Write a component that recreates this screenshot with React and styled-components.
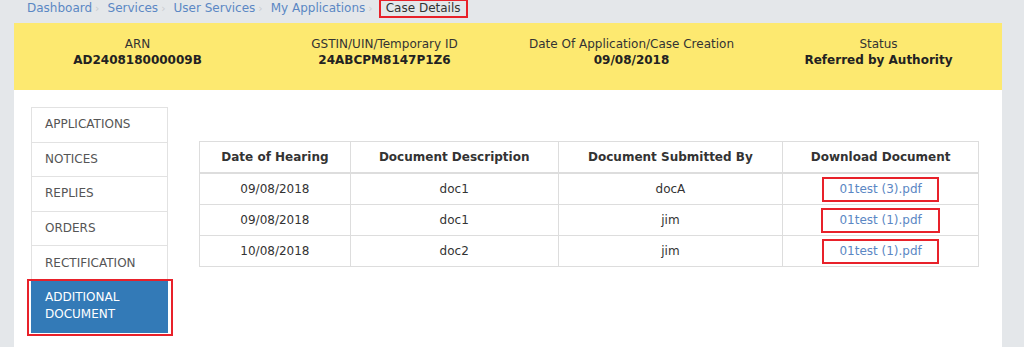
import React from "react";
import styled, { createGlobalStyle } from "styled-components";

const GlobalStyle = createGlobalStyle`
  body {
    margin: 0;
    background: #e4e7ea;
    font-family: "DejaVu Sans", Verdana, sans-serif;
    font-size: 12px;
    color: #333;
  }
`;

const Page = styled.div`
  width: 988px;
  margin-left: 14px;
`;

const Breadcrumb = styled.nav`
  display: flex;
  align-items: flex-start;
  height: 23px;
  padding: 1px 0 0 13px;
  box-sizing: border-box;
  font-size: 12px;
  line-height: 15px;
`;

const Crumb = styled.a`
  color: #5b87c4;
  text-decoration: none;
`;

const Sep = styled.span`
  color: #c9ccd0;
  font-size: 11px;
  margin: 0 8px 0 3px;
`;

const Current = styled.span`
  color: #333;
  padding: 0 5px;
  outline: 2px solid #e8212a;
  line-height: 15px;
`;

const SummaryBand = styled.div`
  display: grid;
  grid-template-columns: repeat(4, 1fr);
  align-items: start;
  box-sizing: border-box;
  height: 67px;
  padding-top: 13px;
  background: #fde970;
`;

const SummaryItem = styled.div`
  text-align: center;
  line-height: 16px;
`;

const SummaryLabel = styled.div`
  color: #333;
`;

const SummaryValue = styled.div`
  font-weight: bold;
  color: #222;
`;

const Content = styled.div`
  display: flex;
  align-items: flex-start;
  gap: 31px;
  background: #fff;
  padding: 18px 23px 14px 17px;
  min-height: 240px;
`;

const SideMenu = styled.ul`
  list-style: none;
  margin: 0;
  padding: 0;
  width: 137px;
  flex-shrink: 0;
`;

const MenuItem = styled.li`
  box-sizing: border-box;
  padding: ${(p) => (p.$active ? "9px 13px" : "0 13px")};
  height: ${(p) => (p.$active ? "53px" : "35.6px")};
  display: flex;
  align-items: center;
  line-height: 17px;
  border: 1px solid #e2e2e2;
  margin-top: -1px;
  color: ${(p) => (p.$active ? "#fff" : "#555")};
  background: ${(p) => (p.$active ? "#337ab7" : "#fff")};
  text-transform: uppercase;
  position: relative;

  ${(p) =>
    p.$active &&
    `
    border-color: #337ab7;
    &::after {
      content: "";
      position: absolute;
      left: -5px;
      right: -6px;
      top: -2px;
      bottom: -4px;
      border: 2px solid #e8212a;
    }
  `}
`;

const TableWrap = styled.div`
  flex: 1;
  margin-top: 33px;
`;

const Table = styled.table`
  width: 100%;
  border-collapse: collapse;
  text-align: center;
`;

const Th = styled.th`
  border: 1px solid #dddddd;
  border-bottom-width: 2px;
  height: 30px;
  padding: 0 8px;
  font-weight: bold;
  color: #333;
`;

const Td = styled.td`
  border: 1px solid #dddddd;
  height: 30px;
  padding: 0 8px;
  color: #333;
`;

const FileLink = styled.a`
  display: inline-block;
  color: #5b87c4;
  text-decoration: none;
  padding: 3px ${(p) => p.$pad}px;
  line-height: 15px;
  outline: 2px solid #e8212a;
`;

const rows = [
  { date: "09/08/2018", desc: "doc1", by: "docA", file: "01test (3).pdf", pad: 15 },
  { date: "09/08/2018", desc: "doc1", by: "jim", file: "01test (1).pdf", pad: 16 },
  { date: "10/08/2018", desc: "doc2", by: "jim", file: "01test (1).pdf", pad: 15 },
];

const menu = [
  "Applications",
  "Notices",
  "Replies",
  "Orders",
  "Rectification",
  "Additional Document",
];

export default function App() {
  return (
    <>
      <GlobalStyle />
      <Page>
        <Breadcrumb>
          <Crumb href="#">Dashboard</Crumb>
          <Sep>›</Sep>
          <Crumb href="#">Services</Crumb>
          <Sep>›</Sep>
          <Crumb href="#">User Services</Crumb>
          <Sep>›</Sep>
          <Crumb href="#">My Applications</Crumb>
          <Sep>›</Sep>
          <Current>Case Details</Current>
        </Breadcrumb>

        <SummaryBand>
          <SummaryItem>
            <SummaryLabel>ARN</SummaryLabel>
            <SummaryValue>AD240818000009B</SummaryValue>
          </SummaryItem>
          <SummaryItem>
            <SummaryLabel>GSTIN/UIN/Temporary ID</SummaryLabel>
            <SummaryValue>24ABCPM8147P1Z6</SummaryValue>
          </SummaryItem>
          <SummaryItem>
            <SummaryLabel>Date Of Application/Case Creation</SummaryLabel>
            <SummaryValue>09/08/2018</SummaryValue>
          </SummaryItem>
          <SummaryItem>
            <SummaryLabel>Status</SummaryLabel>
            <SummaryValue>Referred by Authority</SummaryValue>
          </SummaryItem>
        </SummaryBand>

        <Content>
          <SideMenu>
            {menu.map((m, i) => (
              <MenuItem key={m} $active={i === menu.length - 1}>
                {m}
              </MenuItem>
            ))}
          </SideMenu>

          <TableWrap>
            <Table>
              <colgroup>
                <col style={{ width: 151 }} />
                <col style={{ width: 208 }} />
                <col style={{ width: 225 }} />
                <col style={{ width: 196 }} />
              </colgroup>
              <thead>
                <tr>
                  <Th>Date of Hearing</Th>
                  <Th>Document Description</Th>
                  <Th>Document Submitted By</Th>
                  <Th>Download Document</Th>
                </tr>
              </thead>
              <tbody>
                {rows.map((r, i) => (
                  <tr key={i}>
                    <Td>{r.date}</Td>
                    <Td>{r.desc}</Td>
                    <Td>{r.by}</Td>
                    <Td>
                      <FileLink href="#" $pad={r.pad}>
                        {r.file}
                      </FileLink>
                    </Td>
                  </tr>
                ))}
              </tbody>
            </Table>
          </TableWrap>
        </Content>
      </Page>
    </>
  );
}
